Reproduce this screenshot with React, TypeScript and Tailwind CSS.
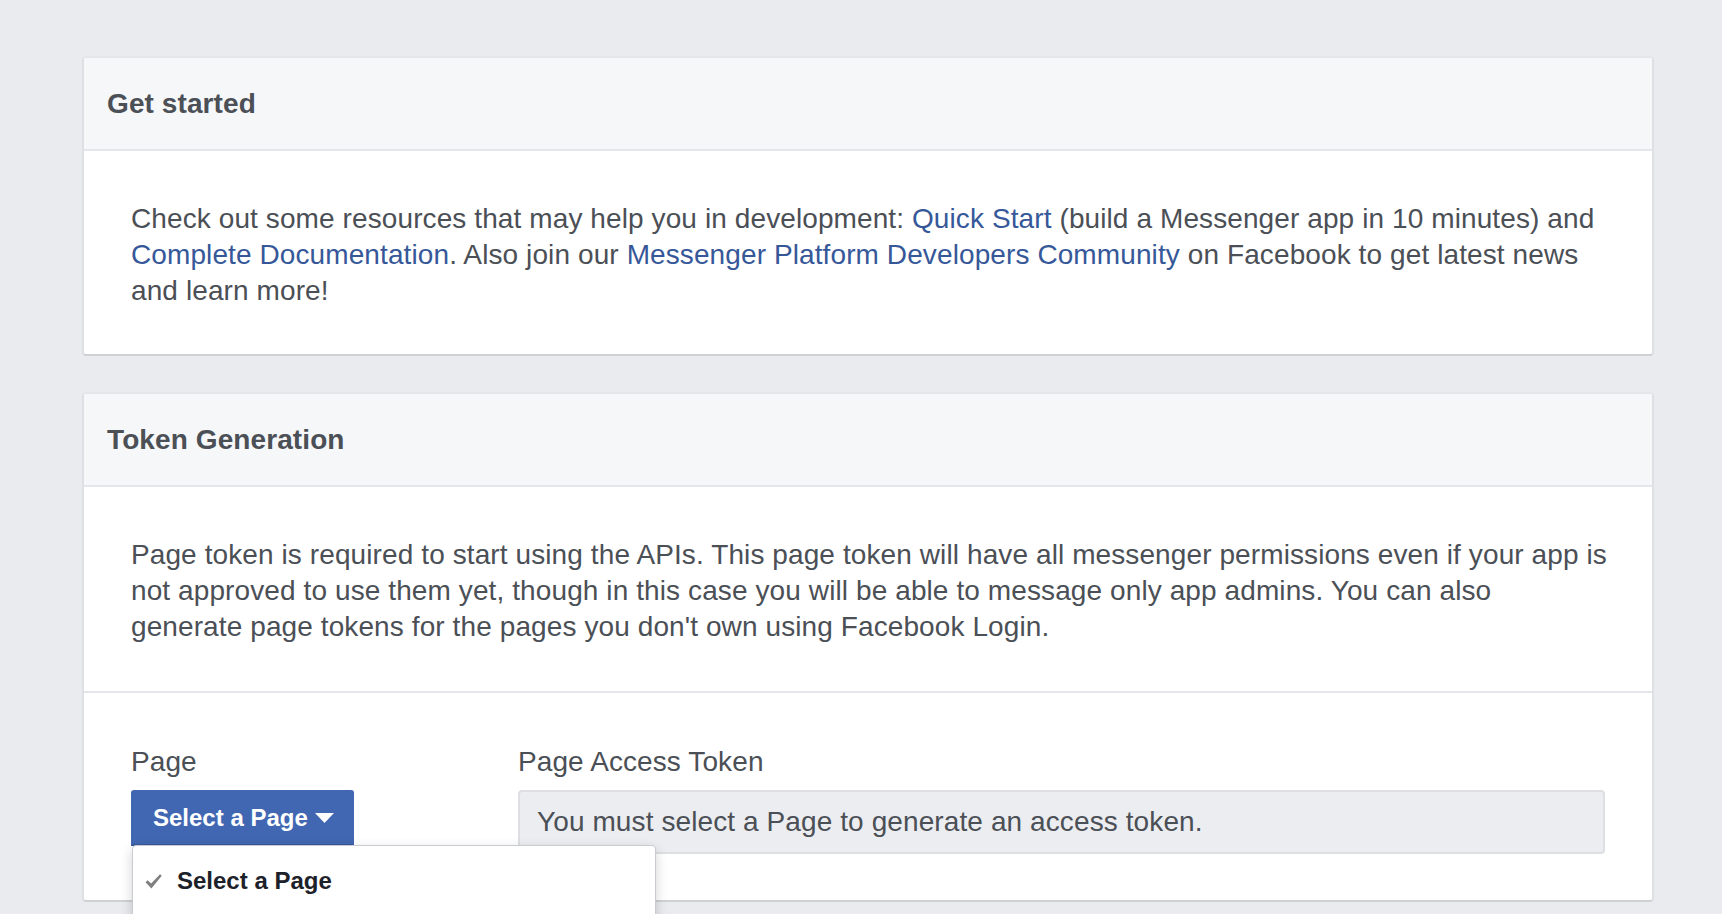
import { ReactNode } from "react";

function Card({ title, children }: { title: string; children: ReactNode }) {
  return (
    <section className="rounded-[4px] border-2 border-[#e5e6e9] border-x-[#dfe0e4] border-b-[#d0d1d5] bg-white">
      <header className="flex h-[93px] items-center rounded-t-[3px] border-b-2 border-[#e5e6e9] bg-[#f6f7f9] px-[23px]">
        <h2 className="text-[28px] font-bold leading-[36px] text-[#4b4f56]">{title}</h2>
      </header>
      {children}
    </section>
  );
}

function Link({ children }: { children: ReactNode }) {
  return <a className="text-[#365899] cursor-pointer">{children}</a>;
}

function PageSelect() {
  return (
    <div className="relative tracking-normal">
      <button className="flex h-[56px] items-center rounded-t-[3px] border-2 border-[#4267b2] border-b-[#365899] bg-[#4267b2] pl-[20px] pr-[18px] text-[24px] font-bold text-white">
        Select a Page
        <svg viewBox="0 0 19 10" className="ml-[7px] h-[10px] w-[19px]">
          <path d="M0 0h19L9.5 10z" fill="#fff" />
        </svg>
      </button>
      <div className="absolute left-[1px] top-[55px] z-10 h-[120px] w-[524px] rounded-t-[4px] border border-[#c9ccd1] bg-white pt-[8px] shadow-[0_4px_12px_rgba(0,0,0,0.18)]">
        <div className="flex h-[54px] items-center">
          <svg viewBox="0 0 17 15" className="ml-[12px] mr-[15px] h-[15px] w-[17px]">
            <path d="M0.5 8.2 2.6 6.3 6.1 9.6 15 0.3 16.8 1.8 6.4 14.6Z" fill="#808080" />
          </svg>
          <span className="text-[24px] font-bold text-[#1d2129]">Select a Page</span>
        </div>
      </div>
    </div>
  );
}

export default function App() {
  return (
    <div
      className="h-screen overflow-hidden bg-[#e9ebee] pt-[56px] tracking-[0.1px]"
      style={{ fontFamily: '"Liberation Sans", Arial, Helvetica, sans-serif' }}
    >
      <div className="ml-[82px] flex w-[1572px] flex-col gap-[36px]">
        <Card title="Get started">
          <p className="whitespace-nowrap px-[47px] pb-[45px] pt-[50px] text-[28px] leading-[36px] text-[#4b4f56]">
            Check out some resources that may help you in development: <Link>Quick Start</Link> (build a
            Messenger app in 10 minutes) and
            <br />
            <Link>Complete Documentation</Link>. Also join our{" "}
            <Link>Messenger Platform Developers Community</Link> on Facebook to get latest news
            <br />
            and learn more!
          </p>
        </Card>

        <Card title="Token Generation">
          <p className="whitespace-nowrap border-b-2 border-[#e5e6e9] px-[47px] pb-[46px] pt-[50px] text-[28px] leading-[36px] text-[#4b4f56]">
            Page token is required to start using the APIs. This page token will have all messenger permissions
            even if your app is
            <br />
            not approved to use them yet, though in this case you will be able to message only app admins. You
            can also
            <br />
            generate page tokens for the pages you don't own using Facebook Login.
          </p>
          <div className="flex px-[47px] pb-[46px] pt-[51px]">
            <div className="w-[387px] shrink-0">
              <div className="mb-[10px] text-[28px] leading-[36px] text-[#4b4f56]">Page</div>
              <PageSelect />
            </div>
            <div className="flex-1">
              <div className="mb-[10px] text-[28px] leading-[36px] text-[#4b4f56]">Page Access Token</div>
              <div className="flex h-[64px] items-center rounded-[4px] border-2 border-[#dddfe2] bg-[#ebedf0] px-[17px] text-[28px] text-[#4b4f56]">
                You must select a Page to generate an access token.
              </div>
            </div>
          </div>
        </Card>
      </div>
    </div>
  );
}
